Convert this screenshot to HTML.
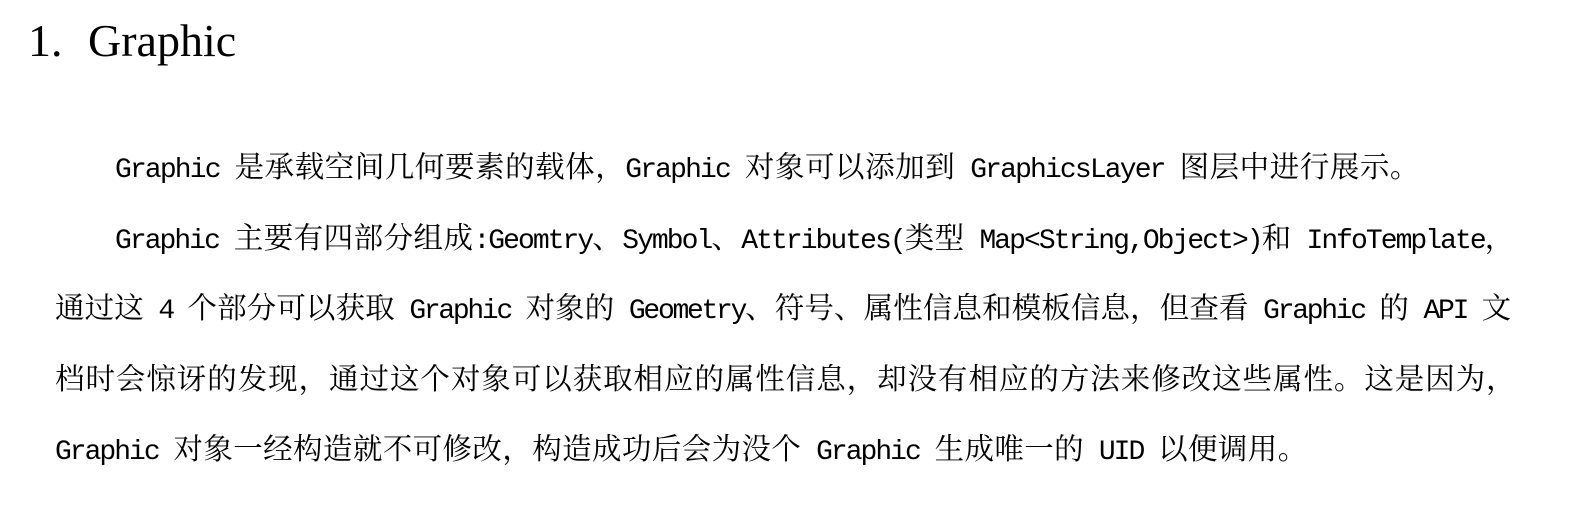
<!DOCTYPE html>
<html lang="zh-CN"><head><meta charset="utf-8"><style>
body{margin:0;width:1591px;height:529px;background:#fff;position:relative;overflow:hidden;color:#000}
.h{position:absolute;left:28px;top:14px;font:46px "Liberation Serif",serif;white-space:nowrap}
.h span{display:inline-block;width:60px}
.l{position:absolute;font-family:"Noto Serif CJK SC","Noto Sans CJK SC",serif;font-size:29.5px;line-height:40px;white-space:nowrap;letter-spacing:var(--s)}
.m{font-family:"Liberation Mono",monospace;font-size:28px;letter-spacing:calc(var(--s) - 2.4px)}
</style></head><body>
<div class="h"><span>1.</span>Graphic</div>
<div class="l" style="left:115px;top:145px;--s:0.55px"><span class="m">Graphic </span>是承载空间几何要素的载体，<span class="m">Graphic </span>对象可以添加到<span class="m"> GraphicsLayer </span>图层中进行展示。</div>
<div class="l" style="left:115px;top:216px;--s:0.45px"><span class="m">Graphic </span>主要有四部分组成<span class="m">:Geomtry</span>、<span class="m">Symbol</span>、<span class="m">Attributes(</span>类型<span class="m"> Map&lt;String,Object&gt;)</span>和<span class="m"> InfoTemplate</span>，</div>
<div class="l" style="left:55px;top:286px;--s:0.12px">通过这<span class="m"> 4 </span>个部分可以获取<span class="m"> Graphic </span>对象的<span class="m"> Geometry</span>、符号、属性信息和模板信息，但查看<span class="m"> Graphic </span>的<span class="m"> API </span>文</div>
<div class="l" style="left:55px;top:357px;--s:0.95px">档时会惊讶的发现，通过这个对象可以获取相应的属性信息，却没有相应的方法来修改这些属性。这是因为，</div>
<div class="l" style="left:55px;top:427px;--s:0.4px"><span class="m">Graphic </span>对象一经构造就不可修改，构造成功后会为没个<span class="m"> Graphic </span>生成唯一的<span class="m"> UID </span>以便调用。</div>
</body></html>
